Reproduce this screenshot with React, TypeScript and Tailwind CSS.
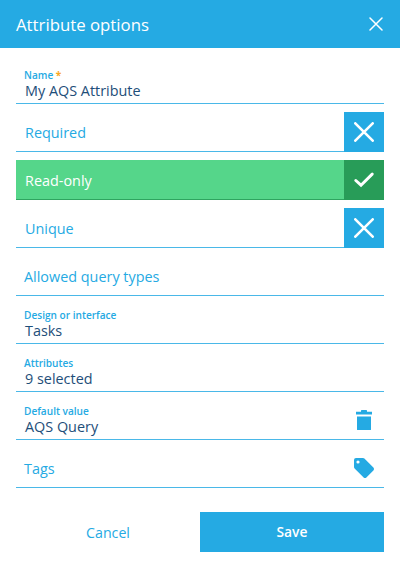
import type { ReactNode } from "react";

interface FieldProps {
  label: string;
  value?: string;
  required?: boolean;
  icon?: ReactNode;
}

interface ToggleProps {
  label: string;
  checked?: boolean;
}

const CrossIcon = () => (
  <svg viewBox="0 0 20 20" className="h-5 w-5" fill="none" stroke="currentColor" strokeWidth={2.6} strokeLinecap="round">
    <path d="M1.3 1.3L18.7 18.7M18.7 1.3L1.3 18.7" />
  </svg>
);

const CheckIcon = () => (
  <svg viewBox="0 0 20 20" className="h-5 w-5" fill="none" stroke="currentColor" strokeWidth={2.9} strokeLinecap="round">
    <path d="M1.8 10.5L7 15.2L18.2 4.1" />
  </svg>
);

const TrashIcon = () => (
  <svg viewBox="0 0 16 20" className="mr-0.5 h-5 w-4" fill="currentColor">
    <path d="M0 1.7H5V0.7Q5 0 5.7 0H10.3Q11 0 11 0.7V1.7H16V4.5H0ZM1 6.5H15V19.4Q15 20 14.4 20H1.6Q1 20 1 19.4Z" />
  </svg>
);

const TagIcon = () => (
  <svg viewBox="0 0 20 20" className="h-5 w-5" fill="currentColor">
    <path
      fillRule="evenodd"
      d="M2 0H9Q9.8 0 10.4 .6L19.4 9.6Q20.6 11 19.4 12.4L12.4 19.4Q11 20.6 9.6 19.4L.6 10.4Q0 9.8 0 9V2Q0 0 2 0ZM4 2.4A1.6 1.6 0 1 0 4 5.6A1.6 1.6 0 1 0 4 2.4Z"
    />
  </svg>
);

const Field = ({ label, value, required, icon }: FieldProps) => (
  <div className="flex h-10 items-center justify-between border-b border-[#4ab8e8] pl-2 pr-2.5">
    {value ? (
      <div>
        <p className="text-[10.1px] font-semibold leading-[15px]">
          {label} {required && <span className="font-bold text-[#f9a825]">*</span>}
        </p>
        <p className="pl-px text-[14.4px] leading-4 text-[#1e4e79]">{value}</p>
      </div>
    ) : (
      <p className="pt-0.5 text-[14.4px] leading-5">{label}</p>
    )}
    {icon}
  </div>
);

const Toggle = ({ label, checked }: ToggleProps) => (
  <div
    className={
      checked
        ? "flex h-10 border-b border-[#2fa560] bg-[#55d68a] font-medium text-white"
        : "flex h-10 border-b border-[#4ab8e8]"
    }
  >
    <p className="flex-1 self-center pl-[9px] pt-0.5 text-[14.4px] leading-5">{label}</p>
    <div
      className={
        checked
          ? "flex h-10 w-10 items-center justify-center bg-[#289c58] text-white"
          : "flex h-10 w-10 items-center justify-center bg-[#25aae3] text-white"
      }
    >
      {checked ? <CheckIcon /> : <CrossIcon />}
    </div>
  </div>
);

export default function App() {
  return (
    <div className="h-[568px] w-[400px] bg-white font-['Open_Sans',sans-serif] text-[#25aae3]">
      <header className="flex h-12 items-center justify-between bg-[#25aae3] pl-4 pr-[17px] text-white">
        <h1 className="pt-px text-[16.8px] leading-6">Attribute options</h1>
        <svg viewBox="0 0 14 14" className="h-3.5 w-3.5" fill="none" stroke="currentColor" strokeWidth={1.5} strokeLinecap="round">
          <path d="M1 1L13 13M13 1L1 13" />
        </svg>
      </header>
      <main className="flex flex-col gap-2 px-4 pt-4">
        <Field label="Name" value="My AQS Attribute" required />
        <Toggle label="Required" />
        <Toggle label="Read-only" checked />
        <Toggle label="Unique" />
        <Field label="Allowed query types" />
        <Field label="Design or interface" value="Tasks" />
        <Field label="Attributes" value="9 selected" />
        <Field label="Default value" value="AQS Query" icon={<TrashIcon />} />
        <Field label="Tags" icon={<TagIcon />} />
      </main>
      <footer className="flex px-4 pt-6 text-[14.2px]">
        <button className="h-10 flex-1 pt-px">Cancel</button>
        <button className="h-10 flex-1 bg-[#25aae3] pt-px text-[13.8px] font-semibold text-white">Save</button>
      </footer>
    </div>
  );
}
